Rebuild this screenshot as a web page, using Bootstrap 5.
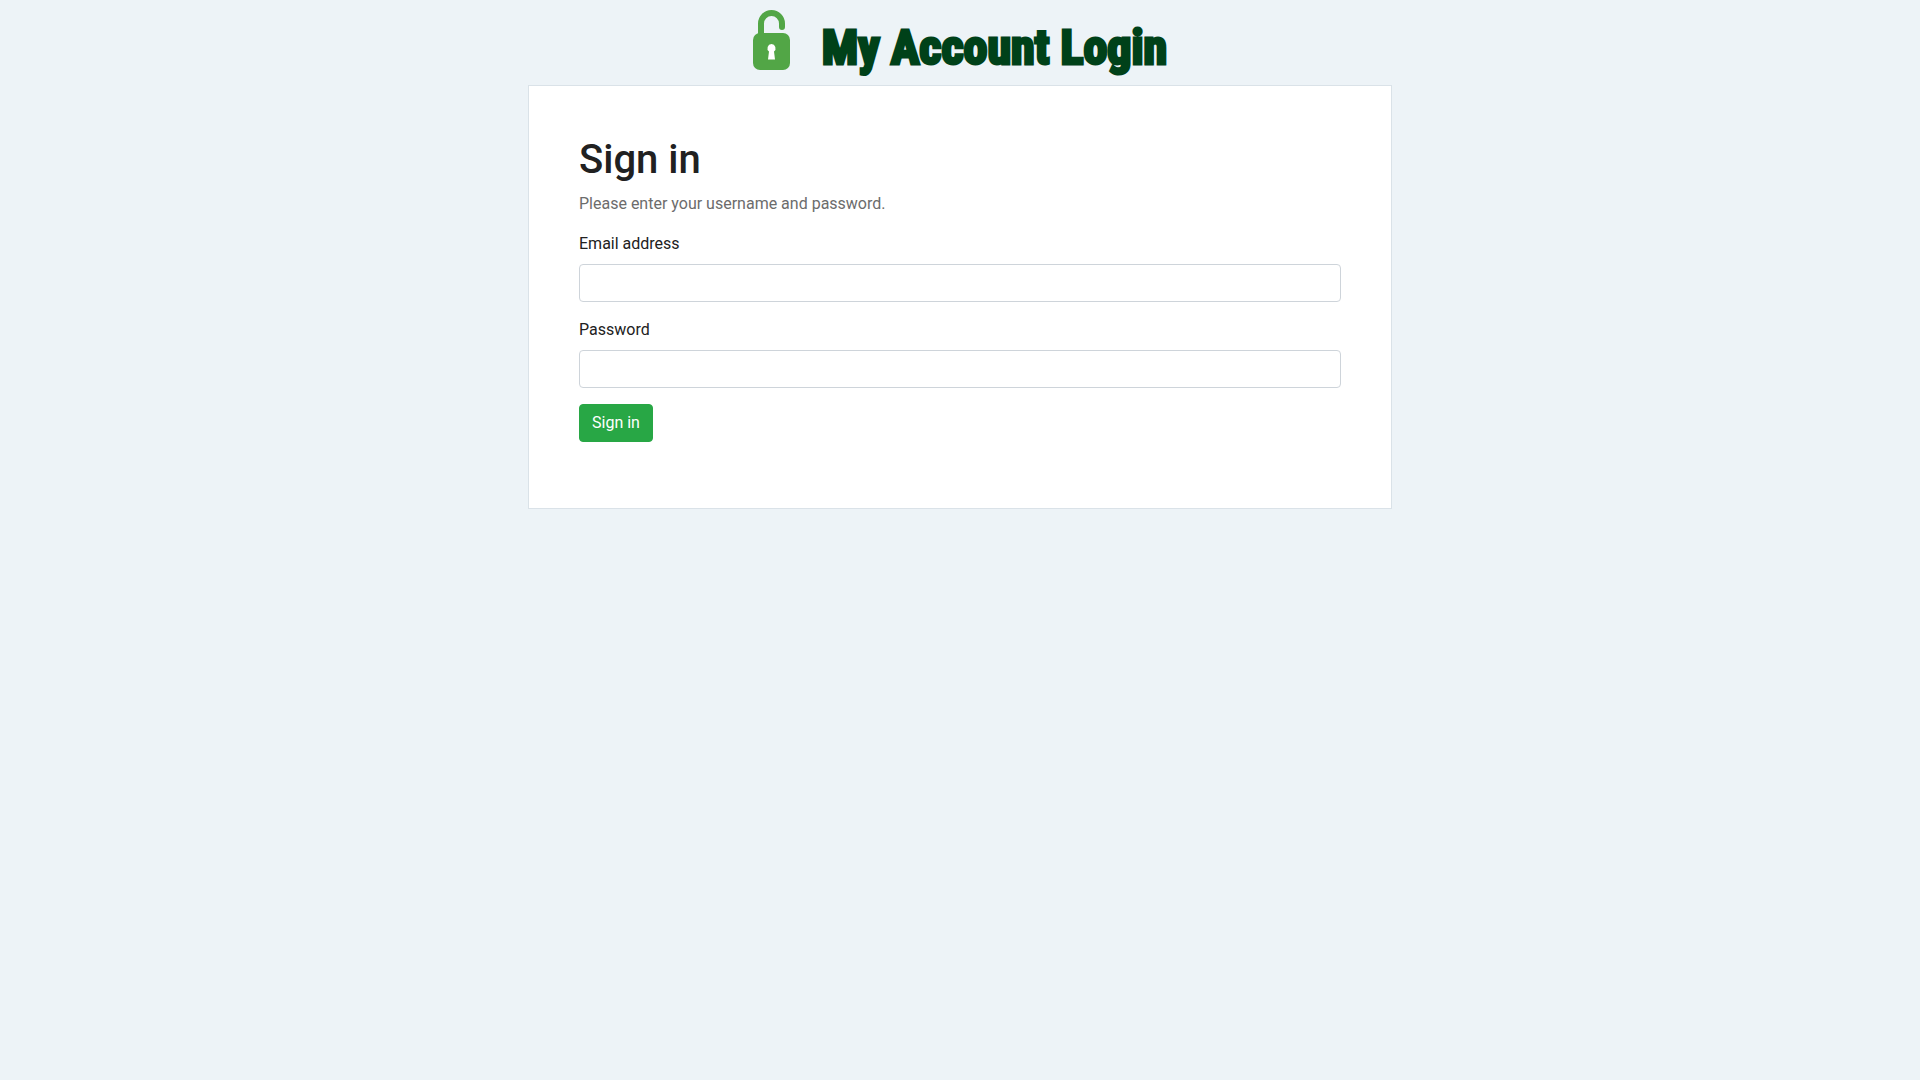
<!DOCTYPE html>
<html lang="en">
<head>
<meta charset="utf-8">
<meta name="viewport" content="width=device-width, initial-scale=1">
<title>My Account Login</title>
<link href="https://cdn.jsdelivr.net/npm/bootstrap@5.3.0/dist/css/bootstrap.min.css" rel="stylesheet">
<style>
  body { background: #edf3f7; color: #212121; font-family: Roboto, sans-serif; }
  .brand { gap: 32px; padding: 10px 0 9px; }
  .brand-name {
    color: #004119;
    font-family: Impact, "Roboto Condensed", Roboto, sans-serif;
    font-size: 48px;
    font-weight: 700;
    line-height: 56px;
    padding-top: 10px;
    -webkit-text-stroke: 3px #004119;
    white-space: nowrap;
  }
  .login-panel { width: 45%; min-width: 320px; padding: 50px; border: 1px solid #dae2e8; background: #fff; }
  .login-panel h1 { font-size: 40px; }
  .hint { color: #6c6c6c; }
  .login-panel .form-control { border-color: #ced4da; border-radius: 4px; }
  .login-panel .btn-success { --bs-btn-bg: #28a745; --bs-btn-border-color: #28a745; --bs-btn-border-radius: 4px; }
</style>
</head>
<body>
<header class="brand d-flex justify-content-center align-items-start">
  <svg width="37" height="60" viewBox="0 0 37 60" aria-hidden="true">
    <path d="M8 27V13.500a10.500 10.500 0 0 1 21 0V17" fill="none" stroke="#52a646" stroke-width="6" stroke-linecap="round"/>
    <rect y="23" width="37" height="37" rx="7" fill="#52a646"/>
    <path d="M18.500 34a4.300 4.300 0 0 0-2.500 7.600L15 49.500h7l-1-7.900A4.300 4.300 0 0 0 18.500 34z" fill="#fff"/>
  </svg>
  <div class="brand-name">My Account Login</div>
</header>
<main class="login-panel mx-auto">
  <h1>Sign in</h1>
  <p class="hint">Please enter your username and password.</p>
  <form>
    <div class="mb-3">
      <label class="form-label" for="email">Email address</label>
      <input type="email" class="form-control" id="email">
    </div>
    <div class="mb-3">
      <label class="form-label" for="password">Password</label>
      <input type="password" class="form-control" id="password">
    </div>
    <button type="submit" class="btn btn-success mb-3">Sign in</button>
  </form>
</main>
<script src="https://cdn.jsdelivr.net/npm/bootstrap@5.3.0/dist/js/bootstrap.bundle.min.js"></script>
</body>
</html>
